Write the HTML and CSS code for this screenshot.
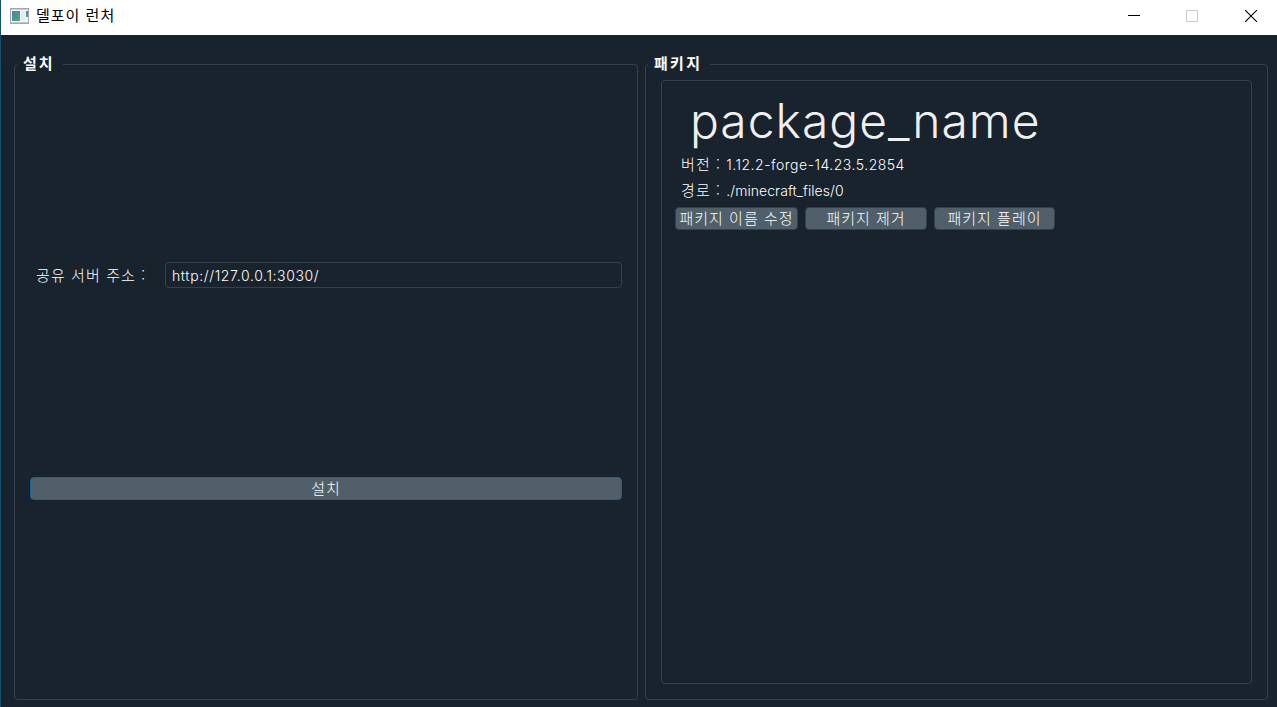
FILE: index.html
```
<!DOCTYPE html>
<html lang="ko">
<head>
<meta charset="utf-8">
<title>델포이 런처</title>
<link rel="stylesheet" href="styles.css">
</head>
<body>
<div class="window">
  <header class="titlebar">
    <svg class="app-icon" width="19" height="16" viewBox="0 0 19 16">
      <defs>
        <linearGradient id="g" x1="0" y1="0" x2="1" y2="1"><stop offset="0" stop-color="#4a84b0"/><stop offset="1" stop-color="#50a878"/></linearGradient>
      </defs>
      <rect x="0.5" y="0.5" width="18" height="15" fill="#f4f6f7" stroke="#a3a7ac"/>
      <rect x="1" y="1" width="17" height="1" fill="#c9cdd2"/>
      <rect x="2" y="3" width="8" height="10" fill="url(#g)"/>
      <rect x="11" y="3" width="4" height="10" fill="#e6ecee"/>
      <rect x="16" y="3" width="2" height="6" fill="url(#g)"/>
      <rect x="1" y="14" width="17" height="1" fill="#c3c6ca"/>
    </svg>
    <span class="app-title">델포이 런처</span>
    <div class="controls">
      <svg width="12" height="12" viewBox="0 0 12 12"><path d="M0 5.5H12" stroke="#000"/></svg>
      <svg width="12" height="12" viewBox="0 0 12 12"><rect x=".5" y=".5" width="11" height="11" fill="none" stroke="#ccc"/></svg>
      <svg width="12" height="12" viewBox="0 0 12 12"><path d="M0 0L12 12M12 0L0 12" stroke="#000" stroke-width="1.1"/></svg>
    </div>
  </header>
  <main class="content">
    <section class="group install">
      <h2 class="group-title t-install">설치</h2>
      <div class="address">
        <label class="label" for="server">공유 서버 주소 :</label>
        <input class="field" id="server" value="http://127.0.0.1:3030/">
      </div>
      <button class="button primary">설치</button>
    </section>
    <section class="group packages">
      <h2 class="group-title t-packages">패키지</h2>
      <div class="list">
        <div class="name">package_name</div>
        <div class="info">버전 : <span class="latin version">1.12.2-forge-14.23.5.2854</span></div>
        <div class="info">경로 : <span class="latin">./minecraft_files/0</span></div>
        <div class="actions">
          <button class="button rename">패키지 이름 수정</button>
          <button class="button remove">패키지 제거</button>
          <button class="button play">패키지 플레이</button>
        </div>
      </div>
    </section>
  </main>
</div>
</body>
</html>
```
FILE: styles.css
```
* { box-sizing: border-box; }
body {
  margin: 0;
  font-family: "Noto Sans CJK KR", sans-serif;
  font-size: 15px;
  font-weight: 300;
  color: #fff;
}
.window {
  width: 1277px;
  height: 707px;
  display: flex;
  flex-direction: column;
  background: #19232d;
  border-left: 1px solid #14506e;
  overflow: hidden;
}
.titlebar {
  height: 35px;
  flex: none;
  display: flex;
  align-items: center;
  background: #fff;
  color: #000;
  padding: 0 20px 3px 9px;
}
.app-title {
  margin: -2px 0 0 7px;
  font-size: 15px;
  font-weight: 400;
  line-height: 20px;
  letter-spacing: 1px;
  white-space: nowrap;
}
.controls { display: flex; margin-left: auto; }
.controls svg { display: block; margin-left: 47px; }
.controls svg:nth-child(2) { margin-left: 46px; }
.content {
  flex: 1;
  display: flex;
  gap: 7px;
  padding: 29px 9px 7px 13px;
}
.group {
  border: 1px solid #32414b;
  border-radius: 4px;
  display: flex;
  flex-direction: column;
}
.install { width: 624px; padding: 0 15px; }
.packages { width: 623px; padding: 0 15px 15px; }
.group-title {
  height: 20px;
  margin: -12px 0 0 -13px;
  padding-left: 6px;
  background: #19232d;
  font-size: 15px;
  font-weight: 700;
  line-height: 19px;
  white-space: nowrap;
}
.t-install { width: 46px; letter-spacing: 2px; }
.t-packages { width: 62px; letter-spacing: 2.3px; }
.address { display: flex; height: 26px; margin-top: 189px; }
.label {
  width: 135px;
  padding-left: 6px;
  line-height: 25px;
  white-space: pre;
  letter-spacing: 1.1px;
}
.field {
  flex: 1;
  min-width: 0;
  border: 1px solid #32414b;
  border-radius: 4px;
  background: #19232d;
  color: #fff;
  padding: 1px 6px 0;
  font: 300 14px Inter, sans-serif;
  letter-spacing: .62px;
  outline: none;
}
.button {
  height: 23px;
  padding: 0 0 2px;
  border: 1px solid #32414b;
  border-radius: 4px;
  background: #505f69;
  color: #fff;
  font: inherit;
  line-height: 19px;
  letter-spacing: 1px;
  white-space: nowrap;
}
.primary { margin-top: 189px; border-color: #1464a0; }
.list {
  flex: 1;
  margin-top: 7px;
  border: 1px solid #32414b;
  border-radius: 4px;
  padding: 13px;
}
.name {
  height: 57px;
  padding-left: 15px;
  color: #f0f0f0;
  font: 300 48px/53px Inter, sans-serif;
  letter-spacing: 1px;
}
.info { height: 26px; padding-left: 6px; line-height: 25px; white-space: nowrap; letter-spacing: 1.1px; }
.latin { font-family: Inter, sans-serif; font-size: 14px; letter-spacing: .05px; }
.version { letter-spacing: .5px; }
.actions { display: flex; gap: 7px; margin-top: 4px; }
.rename { width: 123px; }
.remove { width: 122px; }
.play { width: 121px; }
```
